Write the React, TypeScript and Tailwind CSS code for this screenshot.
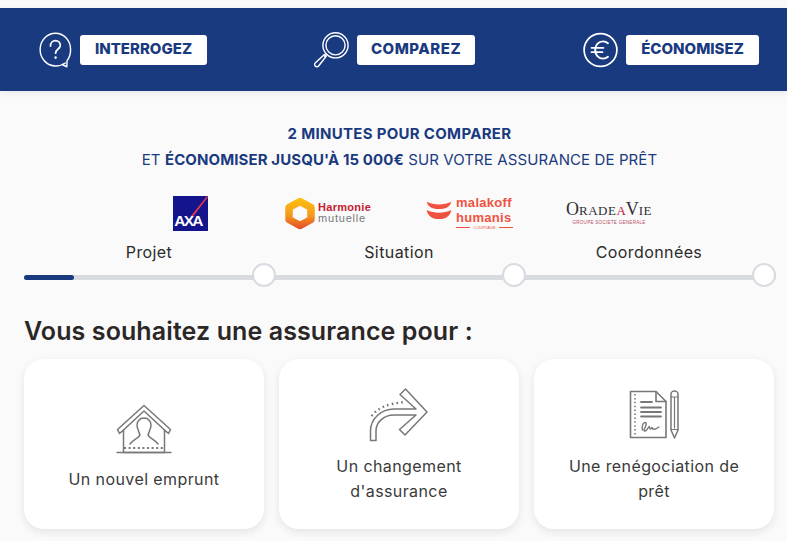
const font = "[font-family:Inter,'Noto_Sans',sans-serif]";

const QuestionIcon = () => (
  <svg width="33" height="36" viewBox="0 0 35 36" preserveAspectRatio="none" fill="none" stroke="white" strokeWidth="1.5" strokeLinecap="round" strokeLinejoin="round">
    <path d="M28 31 C25 33 21.5 34 17.5 34 C8.5 34 1.2 26.5 1.2 17.5 C1.2 8.5 8.5 1.2 17.5 1.2 C26.5 1.2 33.5 8.5 33.5 17.5 C33.5 22 32.5 25.5 29.8 28.5 L29.5 34.8 L24.5 32.5" />
    <path d="M12.2 14 C12.2 10.8 14.6 8.7 17.4 8.7 C20.3 8.7 22.6 10.7 22.6 13.4 C22.6 16.8 17.6 17.4 17.6 21.2" strokeWidth="1.8" />
    <circle cx="17.6" cy="25.6" r="0.6" strokeWidth="1.4" />
  </svg>
);

const SearchIcon = () => (
  <svg width="35" height="36" viewBox="0 0 35 36" fill="none" stroke="white" strokeWidth="1.4" strokeLinecap="round" strokeLinejoin="round">
    <circle cx="21.5" cy="13.3" r="12.6" />
    <circle cx="21.5" cy="13.3" r="9.6" />
    <path d="M12.6 22.2 L10.6 24.2" />
    <path d="M10.4 22.4 L12.2 24.2 L4.6 34 C3.6 35 2 35 1.2 34 C0.4 33 0.5 31.7 1.4 30.8 Z" />
  </svg>
);

const EuroIcon = () => (
  <svg width="35" height="36" viewBox="0 0 35 36" fill="none" stroke="white" strokeLinecap="round">
    <circle cx="17.5" cy="18" r="16.4" strokeWidth="1.7" />
    <path d="M25 11.2 C23.6 10 21.8 9.4 20 9.4 C15.4 9.4 12.2 13.2 12.2 18 C12.2 22.8 15.4 26.6 20 26.6 C21.8 26.6 23.6 26 25 24.8" strokeWidth="1.9" />
    <path d="M8.5 15.8 H20.5 M8.5 20.2 H19.5" strokeWidth="1.7" />
  </svg>
);

const AxaLogo = () => (
  <svg width="35" height="35" viewBox="0 0 35 35">
    <rect width="35" height="35" fill="#14148c" />
    <path d="M34 0 L18 20 L20.5 20 L35 1 Z" fill="#e8384f" />
    <text x="15" y="30" textAnchor="middle" fill="white" fontSize="15.5" fontWeight="700" letterSpacing="-1.8" fontFamily="Liberation Sans, sans-serif">AXA</text>
  </svg>
);

const HarmonieLogo = () => (
  <div className="flex items-center gap-[3px]">
    <svg width="30" height="33" viewBox="0 0 30 33" fill="none">
      <path d="M15 4.5 L26 10.5 V22.5 L15 28.5 L4 22.5 V10.5 Z" stroke="url(#hm)" strokeWidth="7.5" strokeLinejoin="round" />
      <defs>
        <linearGradient id="hm" x1="15" y1="0" x2="15" y2="33" gradientUnits="userSpaceOnUse">
          <stop offset="0" stopColor="#fdc30c" />
          <stop offset="0.55" stopColor="#f59a1c" />
          <stop offset="1" stopColor="#e2452a" />
        </linearGradient>
      </defs>
    </svg>
    <div className="flex flex-col font-['Liberation_Sans',sans-serif] text-[11px] leading-[11px] tracking-[0.3px]">
      <span className="font-bold text-[#c4202f]">Harmonie</span>
      <span className="text-[#77777a] tracking-[0.8px]">mutuelle</span>
    </div>
  </div>
);

const MalakoffLogo = () => (
  <div className="flex items-start gap-[4px]">
    <svg width="26" height="20" viewBox="0 0 27 22" className="mt-[4px]" fill="#f1523f">
      <path d="M0 2 C8 6 19 6 27 2 C26 7 22 10 13.5 10 C5 10 1 7 0 2 Z" />
      <path d="M0 11 C8 15 19 15 27 11 C26 17 22 21 13.5 21 C5 21 1 17 0 11 Z" />
    </svg>
    <div className="flex w-[57px] flex-col">
      <div className="flex flex-col gap-[1px] font-['Liberation_Sans',sans-serif] text-[13px] leading-[14px] font-bold tracking-[0.3px] text-[#f1523f]">
        <span>malakoff</span>
        <span>humanis</span>
      </div>
      <div className="flex items-center gap-[3px]">
        <span className="h-px flex-1 bg-[#f1523f]" />
        <span className="font-['Liberation_Sans',sans-serif] text-[4px] leading-[5px] text-[#f1523f]">COURTAGE</span>
        <span className="h-px flex-1 bg-[#f1523f]" />
      </div>
    </div>
  </div>
);

const OradeaLogo = () => (
  <div className="flex flex-col items-center font-['Liberation_Serif',serif]">
    <div className="flex items-baseline leading-[19px] text-[#2f2f33]">
      <span className="text-[18px]">O</span>
      <span className="text-[13px] tracking-[0.5px]">RADE</span>
      <span className="text-[13px] text-[#c2123a]">A</span>
      <span className="text-[18px]">V</span>
      <span className="text-[13px] tracking-[0.5px]">IE</span>
    </div>
    <span className="font-['Liberation_Sans',sans-serif] text-[4.5px] leading-[6px] tracking-[0.3px] text-[#b64a68]">GROUPE SOCIETE GENERALE</span>
  </div>
);

const HouseIcon = () => (
  <svg width="56" height="50" viewBox="0 0 56 50" fill="none" stroke="#777777" strokeWidth="1.5" strokeLinejoin="round" strokeLinecap="round">
    <path d="M28 1.5 L54.5 25.5 L52.5 29.5 L48.5 26 V48.5 H7.5 V26 L3.5 29.5 L1.5 25.5 Z" />
    <path d="M7.5 26 L28 7 L48.5 26" />
    <path d="M1 48.5 H55" />
    <path d="M28 14 C23.5 14 21 17.5 21 21 C21 25 23.5 29 24 31 C23 34 17 35.5 14 40 M28 14 C32.5 14 35 17.5 35 21 C35 25 32.5 29 32 31 C33 34 39 35.5 42 40" />
    <path d="M8 44 H48" strokeDasharray="2 2.6" strokeLinecap="butt" strokeWidth="2" />
  </svg>
);

const ArrowIcon = () => (
  <svg width="60" height="54" viewBox="0 0 60 54" fill="none" stroke="#777777" strokeWidth="1.5" strokeLinejoin="round">
    <path d="M1.5 52.5 V43 C1.5 31 12 21 25 21 H47 L31 6.5 L36.5 1 L58 24 L36 47 L30.5 41.5 L47 27 H25 C15 27 7 34 7 43 V52.5 Z" />
    <path d="M2.5 28 C9 20 17 16 36 14" strokeDasharray="1.6 3.2" strokeWidth="2.4" />
  </svg>
);

const DocIcon = () => (
  <svg width="50" height="50" viewBox="0 0 50 50" fill="none" stroke="#777777" strokeWidth="1.6" strokeLinejoin="round" strokeLinecap="round">
    <path d="M1.5 1.5 H27 L37 11.5 V47.5 H1.5 Z" />
    <path d="M27 1.5 V11.5 H37" />
    <path d="M6 4 V45" strokeDasharray="1.5 2.4" strokeLinecap="butt" />
    <path d="M12 12 H23 M12 17.5 H32 M12 22 H32 M12 26.5 H32" strokeWidth="1.8" />
    <path d="M13.5 40 C12 36 15 31 17 33 C18.5 35 13 41 16 41 C18.5 41 20 35 20.5 37 C21 40 22 39 23 37.5 C23.5 40 26 40 30 37" strokeWidth="1.4" />
    <path d="M42 4 C42 2 44 1 45.5 1 C47 1 49 2 49 4 V40 L45.5 48 L42 40 Z" strokeWidth="1.5" />
    <path d="M42 7 H49 M42 39.5 H49 M45.5 8 V38" strokeWidth="1.2" />
  </svg>
);

const actions = [
  { label: 'INTERROGEZ', icon: <QuestionIcon />, w: 'w-[127px]', extra: '' },
  { label: 'COMPAREZ', icon: <SearchIcon />, w: 'w-[118px] tracking-[0.5px]', extra: '' },
  { label: 'ÉCONOMISEZ', icon: <EuroIcon />, w: 'w-[133px]', extra: 'ml-[1px]' },
];

const steps = ['Projet', 'Situation', 'Coordonnées'];

const cards = [
  { label: 'Un nouvel emprunt', icon: <HouseIcon />, top: 'pt-[45px]' },
  { label: 'Un changement d\'assurance', icon: <ArrowIcon />, top: 'pt-[29px]' },
  { label: 'Une renégociation de prêt', icon: <DocIcon />, top: 'pt-[31px]' },
];

export default function App() {
  return (
    <div className={`h-[541px] w-[787px] overflow-hidden bg-[#fafafa] pt-[8px] ${font}`}>
      <div className="flex h-[83px] items-center gap-[107px] bg-[#1a3a80] pl-[39px] shadow-[0_2px_6px_rgba(0,0,0,0.08)]">
        {actions.map((a) => (
          <div key={a.label} className={`flex items-center gap-[8px] ${a.extra}`}>
            {a.icon}
            <div className={`flex h-[30px] items-center justify-center rounded-[3px] bg-white text-[15px] font-extrabold text-[#1a3a80] ${a.w}`}>
              {a.label}
            </div>
          </div>
        ))}
      </div>

      <div className="mt-[30px] flex flex-col items-center pl-[12px] text-[15px] leading-[26px] tracking-[0.1px] text-[#1a3a80]">
        <p className="font-bold tracking-[0.3px]">2 MINUTES POUR COMPARER</p>
        <p>ET <span className="font-bold">ÉCONOMISER JUSQU'À 15 000€</span> SUR VOTRE ASSURANCE DE PRÊT</p>
      </div>

      <div className="mt-[21px] flex h-[38px] items-center pl-[173px]">
        <div className="w-[112px]"><AxaLogo /></div>
        <div className="w-[141px]"><HarmonieLogo /></div>
        <div className="w-[140px]"><MalakoffLogo /></div>
        <OradeaLogo />
      </div>

      <div className="mx-[24px] mt-[8px] grid w-[750px] grid-cols-3 text-center text-[16px] leading-[24px] tracking-[0.4px] text-[#2b2b2b]">
        {steps.map((s) => (
          <span key={s}>{s}</span>
        ))}
      </div>

      <div className="relative mt-[11px] ml-[24px] h-[5px] w-[752px] rounded-full bg-[#d8dce1]">
        <div className="h-full w-[50px] rounded-full bg-[#1a3a80]" />
        <div className="absolute top-[-12px] left-[228px] size-[24px] rounded-full border-2 border-[#d8dce1] bg-white" />
        <div className="absolute top-[-12px] left-[478px] size-[24px] rounded-full border-2 border-[#d8dce1] bg-white" />
        <div className="absolute top-[-12px] left-[728px] size-[24px] rounded-full border-2 border-[#d8dce1] bg-white" />
      </div>

      <h1 className="mt-[33px] ml-[24px] text-[25px] leading-[36px] font-semibold tracking-[0.1px] text-[#2b2726]">
        Vous souhaitez une assurance pour :
      </h1>

      <div className="mt-[10px] ml-[24px] flex w-[750px] gap-[15px]">
        {cards.map((c) => (
          <div key={c.label} className="flex h-[170px] w-[240px] flex-col items-center rounded-[20px] bg-white px-[30px] shadow-[0_3px_10px_rgba(0,0,0,0.09)]">
            <div className={`h-[90px] ${c.top}`}>{c.icon}</div>
            <p className="flex h-[60px] items-center text-center text-[16px] leading-[25px] tracking-[0.4px] text-[#3a3a3a]">{c.label}</p>
          </div>
        ))}
      </div>
    </div>
  );
}
